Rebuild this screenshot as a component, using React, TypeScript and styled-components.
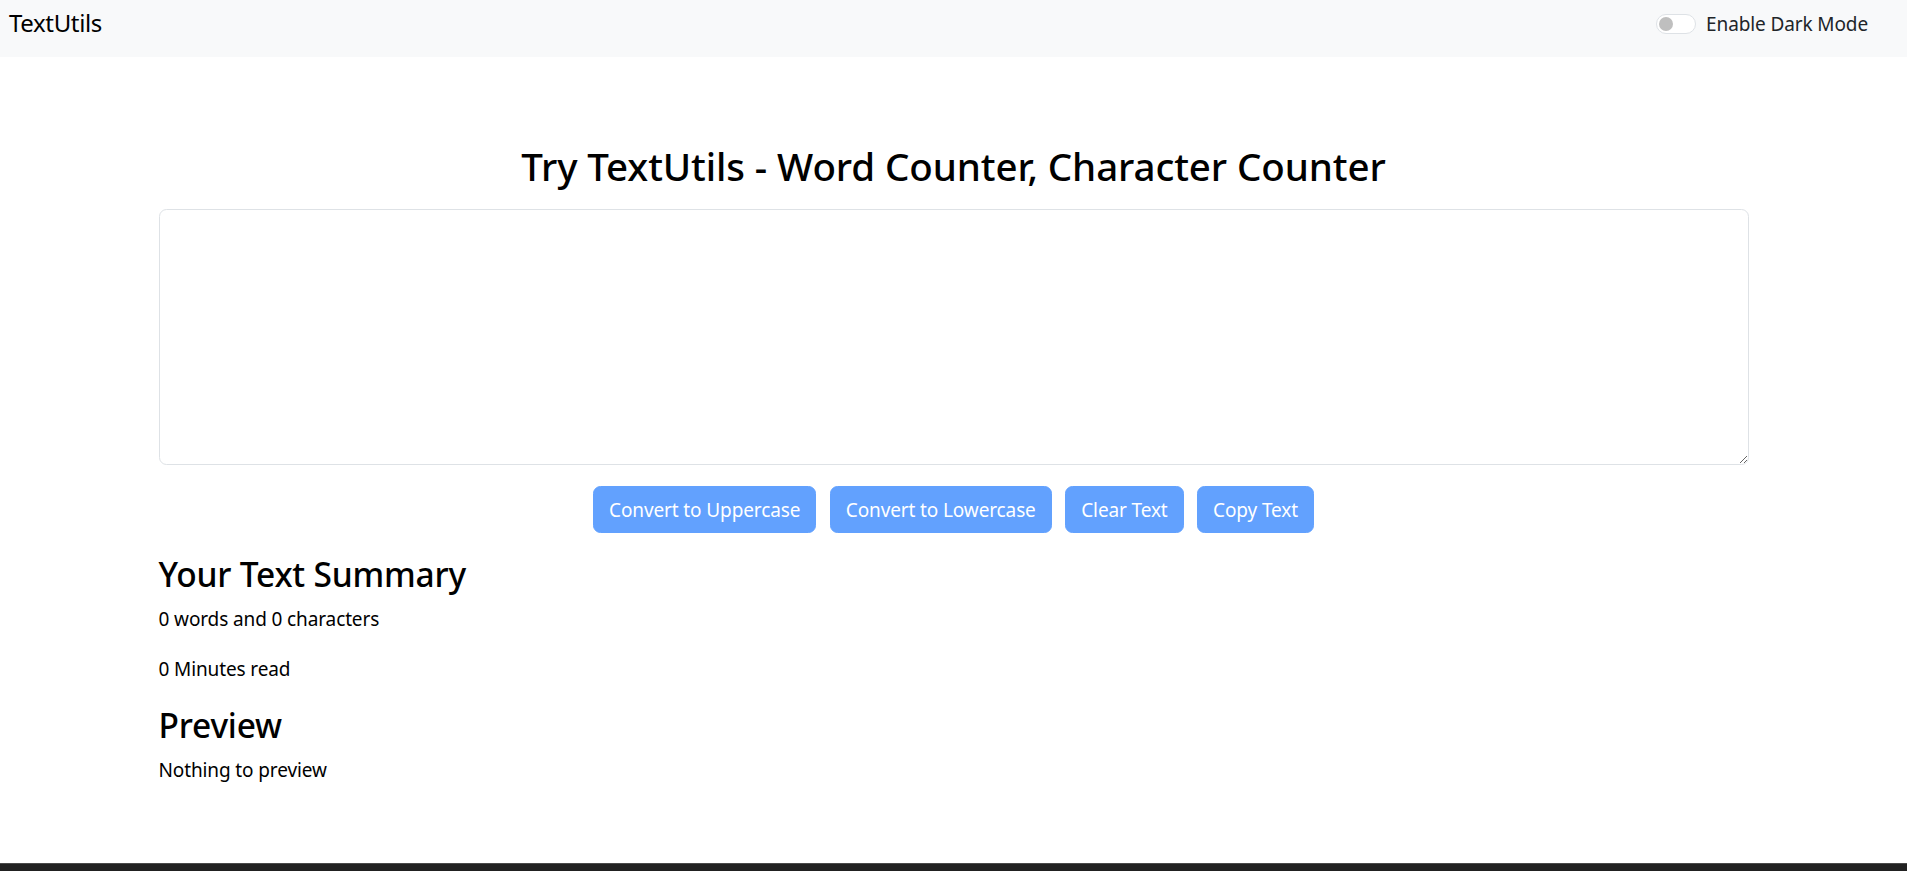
import React from "react";
import styled, { createGlobalStyle } from "styled-components";

const GlobalStyle = createGlobalStyle`
  html, body { margin: 0; padding: 0; background: #fff; }
  body {
    font-family: "Noto Sans", "Open Sans", Arial, sans-serif;
    color: #212529;
    font-size: 19px;
    letter-spacing: -0.12px;
    line-height: 30px;
  }
  * { box-sizing: border-box; }
`;

const Page = styled.div`
  min-height: 871px;
  display: flex;
  flex-direction: column;
`;

const Navbar = styled.nav`
  height: 57px;
  background: #f8f9fa;
  display: flex;
  align-items: center;
  justify-content: space-between;
  padding: 0 39px 0 9px;
`;

const Brand = styled.a`
  font-size: 24px;
  letter-spacing: -0.35px;
  color: #000;
  text-decoration: none;
  line-height: 1;
  margin-top: -11px;
`;

const SwitchWrap = styled.label`
  display: flex;
  align-items: center;
  gap: 10px;
  margin-top: -10px;
  color: #212529;
`;

const Switch = styled.span`
  width: 40px;
  height: 20px;
  border-radius: 10px;
  border: 1px solid #dee2e6;
  background: #fff;
  display: flex;
  align-items: center;
  padding-left: 2px;
`;

const Knob = styled.span`
  width: 14px;
  height: 14px;
  border-radius: 50%;
  background: #bfbfbf;
`;

const Main = styled.main`
  width: 1590px;
  margin: 0 auto;
  flex: 1;
`;

const Title = styled.h1`
  font-size: 38.5px;
  letter-spacing: -0.1px;
  font-weight: 500;
  line-height: 1.2;
  text-align: center;
  color: #000;
  margin: 86px 0 20px;
`;

const TextArea = styled.textarea`
  display: block;
  width: 100%;
  height: 256px;
  border: 1px solid #dee2e6;
  border-radius: 7.5px;
  padding: 7.5px 15px;
  font: inherit;
  resize: vertical;
  outline: none;
`;

const ButtonRow = styled.div`
  display: flex;
  justify-content: center;
  gap: 13.5px;
  margin-top: 21px;
`;

const Button = styled.button`
  background: rgb(98, 161, 254);
  border: 1px solid rgb(98, 161, 254);
  color: #fff;
  border-radius: 7.5px;
  padding: 7.5px 15px;
  font-family: inherit;
  font-size: 19px;
  letter-spacing: -0.12px;
  line-height: 30px;
`;

const Heading = styled.h3`
  font-size: 33.5px;
  letter-spacing: -0.2px;
  font-weight: 500;
  line-height: 42px;
  color: #000;
  margin: 20px 0 9px;
`;

const Para = styled.p`
  margin: 0 0 20px;
  color: #000;
`;

const Footer = styled.footer`
  height: 8px;
  background: #212121;
  border-top: 1px solid #4a4a4a;
`;

export default function App() {
  return (
    <Page>
      <GlobalStyle />
      <Navbar>
        <Brand href="#">TextUtils</Brand>
        <SwitchWrap>
          <Switch>
            <Knob />
          </Switch>
          Enable Dark Mode
        </SwitchWrap>
      </Navbar>
      <Main>
        <Title>Try TextUtils - Word Counter, Character Counter</Title>
        <TextArea />
        <ButtonRow>
          <Button disabled>Convert to Uppercase</Button>
          <Button disabled>Convert to Lowercase</Button>
          <Button disabled>Clear Text</Button>
          <Button disabled>Copy Text</Button>
        </ButtonRow>
        <Heading>Your Text Summary</Heading>
        <Para>0 words and 0 characters</Para>
        <Para>0 Minutes read</Para>
        <Heading>Preview</Heading>
        <Para>Nothing to preview</Para>
      </Main>
      <Footer />
    </Page>
  );
}
